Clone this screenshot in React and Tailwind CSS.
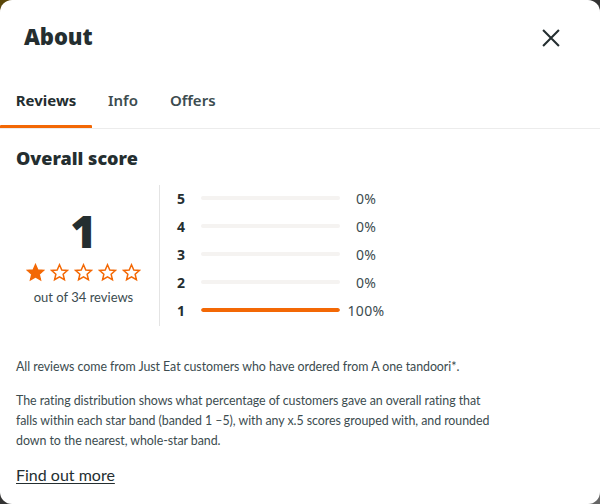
import React from 'react'

const Star = ({ filled }) => (
  <svg width="19" height="19" viewBox="0 0 24 24" className="shrink-0">
    <path
      d="M12 2.2l2.9 6.6 7.1.6-5.4 4.7 1.6 7-6.2-3.7-6.2 3.7 1.6-7L2 9.4l7.1-.6z"
      fill={filled ? '#f36805' : 'none'}
      stroke="#f36805"
      strokeWidth="1.9"
      strokeLinejoin="miter"
    />
  </svg>
)

const rows = [
  { star: 5, pct: 0 },
  { star: 4, pct: 0 },
  { star: 3, pct: 0 },
  { star: 2, pct: 0 },
  { star: 1, pct: 100 },
]

export default function App() {
  return (
    <div className="w-[600px] h-[504px] bg-gradient-to-br from-[#5a4708] via-[#333] to-[#666] overflow-hidden">
      <div className="w-full h-full bg-white rounded-[12px] flex flex-col text-[#242e30] font-['Lato',sans-serif]">
        <div className="flex items-start justify-between pl-6 pr-[39px] pt-[20px] h-[76px]">
          <h1 className="text-[22px] leading-[32px] font-black font-['Noto_Sans',sans-serif] tracking-[-0.1px]">About</h1>
          <button className="w-[20px] h-[20px] mt-[8px] flex items-center justify-center">
            <svg width="18" height="18" viewBox="0 0 20 20">
              <path d="M2 2L18 18M18 2L2 18" stroke="#242e30" strokeWidth="2.3" strokeLinecap="square" />
            </svg>
          </button>
        </div>

        <div className="flex border-b border-[#ececec] h-[53px] text-[15px] font-bold font-['Noto_Sans',sans-serif]">
          <div className="relative w-[92px] flex items-center justify-center pb-[4px]">
            <span>Reviews</span>
            <div className="absolute left-0 right-0 bottom-0 h-[3px] bg-[#f36805] rounded-t-[1px]" />
          </div>
          <div className="flex items-center pl-4 pb-[4px] text-[#3c4c4f] font-semibold">Info</div>
          <div className="flex items-center pl-8 pb-[4px] text-[#3c4c4f] font-semibold">Offers</div>
        </div>

        <div className="px-4 pt-[17px]">
          <h2 className="text-[18px] font-black font-['Noto_Sans',sans-serif] leading-[24px]">Overall score</h2>

          <div className="flex mt-[15px] h-[141px]">
            <div className="w-[144px] pr-[8px] flex flex-col items-center pt-[25px] border-r border-[#e4e4e4]">
              <div className="text-[45px] leading-[42px] font-black font-['Noto_Sans',sans-serif]">1</div>
              <div className="flex gap-[5px] mt-[11px]">
                {[0, 1, 2, 3, 4].map((i) => (
                  <Star key={i} filled={i === 0} />
                ))}
              </div>
              <div className="text-[13px] mt-[6px] text-[#3c4c4f]">out of 34 reviews</div>
            </div>

            <div className="flex flex-col pl-[17px] pt-[3px] gap-[8px]">
              {rows.map((r) => (
                <div key={r.star} className="flex items-center h-[20px]">
                  <span className="w-[24px] text-[14px] font-bold font-['Noto_Sans',sans-serif]">{r.star}</span>
                  <div className="w-[139px] h-[4px] rounded-full bg-[#f5f3f1] overflow-hidden">
                    <div className="h-full bg-[#f36805] rounded-full" style={{ width: `${r.pct}%` }} />
                  </div>
                  <span className="w-[44px] text-center text-[14px] tracking-[0.3px] font-['Noto_Sans',sans-serif] text-[#3c4c4f] ml-[4px]">
                    {r.pct}%
                  </span>
                </div>
              ))}
            </div>
          </div>

          <div className="max-w-[488px] text-[12.4px] tracking-[-0.05px] leading-[20px] text-[#3c4c4f]">
            <p className="mt-[31px]">
              All reviews come from Just Eat customers who have ordered from A one tandoori*.
            </p>
            <p className="mt-[14px]">
              The rating distribution shows what percentage of customers gave an overall rating that falls within each star band (banded 1 –5), with any x.5 scores grouped with, and rounded down to the nearest, whole-star band.
            </p>
          </div>
          <a href="#" className="inline-block mt-[12px] text-[16px] underline underline-offset-2 text-[#242e30]">
            Find out more
          </a>
        </div>
      </div>
    </div>
  )
}
